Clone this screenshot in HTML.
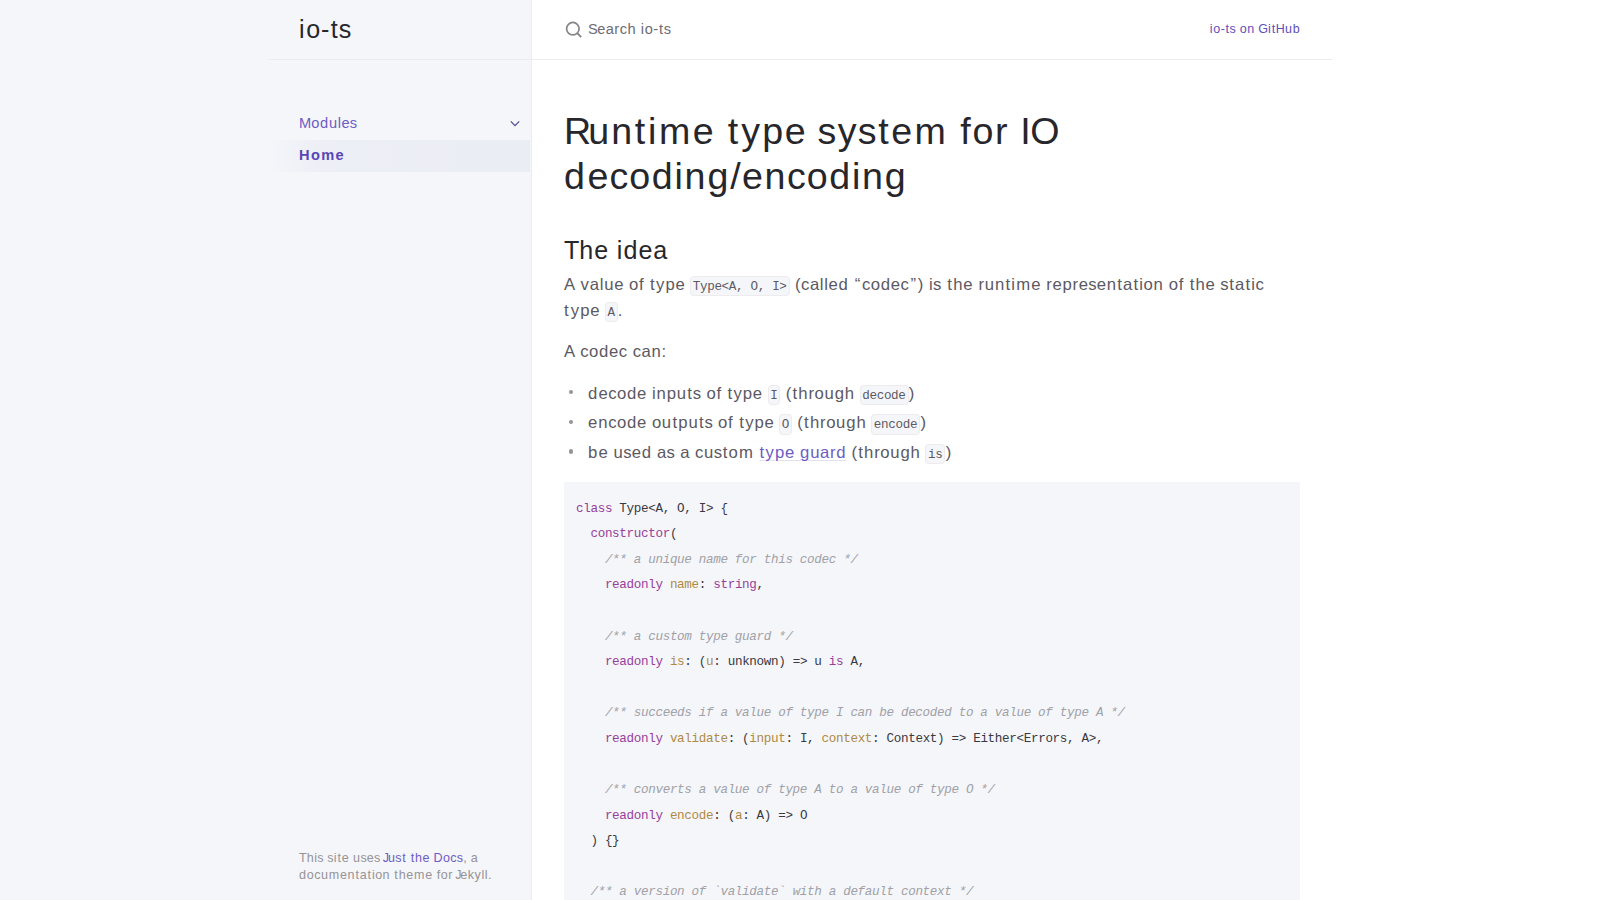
<!DOCTYPE html>
<html><head><meta charset="utf-8">
<title>io-ts</title>
<style>
* { box-sizing: border-box; margin: 0; padding: 0; }
html, body { width: 1600px; height: 900px; overflow: hidden; background: #fff; }
body { font-family: "Liberation Sans",sans-serif; font-size: 16.72px; line-height: 22.4px; color: #5c5962; position: relative; }
a { color: #6d5cc4; text-decoration: none; }
.side-bar { position: absolute; left: 0; top: 0; width: 532px; height: 900px; background: #f5f6fa; border-right: 1px solid #eeebee; }
.site-header { position: absolute; left: 268px; top: 0; width: 263px; height: 60px; border-bottom: 1px solid #eeebee; }
.site-title { position: absolute; left: 31px; top: 14px; font-size: 25.08px; line-height: 30px; color: #27262b; white-space: nowrap; }
.nav-modules { position: absolute; left: 299px; top: 111px; font-size: 14.63px; line-height: 24px; color: #6d5cc4; white-space: nowrap; }
.chev { position: absolute; left: 507px; top: 115px; }
.nav-home { position: absolute; left: 268px; top: 140px; width: 262px; height: 32px; padding: 3px 0 0 31px; font-size: 14.63px; line-height: 24px; font-weight: 700; color: #5845b5; white-space: nowrap;
  background-image: linear-gradient(-90deg, rgba(235,237,245,1) 0%, rgba(235,237,245,0.8) 80%, rgba(235,237,245,0) 100%); }
.site-footer { position: absolute; left: 299px; top: 850px; font-size: 12.54px; line-height: 16.8px; color: #959396; white-space: nowrap; }
.main-header { position: absolute; left: 532px; top: 0; width: 800px; height: 60px; border-bottom: 1px solid #eeebee; }
.search-icon { position: absolute; left: 564px; top: 20px; }
.search-text { position: absolute; left: 588px; top: 19px; font-size: 14.63px; line-height: 20px; color: #6e6c74; white-space: nowrap; }
.gh { position: absolute; right: 300px; top: 19px; font-size: 12.54px; line-height: 20px; color: #6050b8; white-space: nowrap; }
.content { position: absolute; left: 564px; top: 109px; width: 736px; }
h1 { font-size: 37.62px; line-height: 45px; font-weight: 400; color: #27262b; margin: 0 0 9px 0; white-space: nowrap; }
h2 { font-size: 25.08px; line-height: 30px; font-weight: 400; color: #27262b; margin: 37px 0 6px 0; white-space: nowrap; position: relative; top: -1px; }
p { line-height: 25.6px; margin: 0 0 16px 0; white-space: nowrap; }
ul { list-style: none; margin: 16px 0 16px 0; padding-left: 24px; }
li { line-height: 25.6px; position: relative; white-space: nowrap; }
li + li { margin-top: 4px; }
li i.b { position: absolute; left: -19.4px; top: 9.4px; width: 4.2px; height: 4.2px; border-radius: 50%; background: #959396; }
code { font-family: "Liberation Mono",monospace; font-size: 12.6px; line-height: 16.8px; padding: 3.05px 1.8px 1.45px 1.8px; background: #f5f6fa; border: 1px solid #eeebee; border-radius: 4px; color: #5c5962; }
a.ul { text-decoration: underline; text-decoration-color: #e4e0ec; text-underline-offset: 2px; text-decoration-thickness: 1px; }
pre { position: relative; margin-top: 16px; padding: 12px; background: #f5f6fa; font-family: "Liberation Sans",sans-serif; font-size: 16px; line-height: 25.6px; height: 500px; white-space: pre; }
pre span.l { font-family: "Liberation Mono",monospace; font-size: 12.6px; letter-spacing: -0.337px; line-height: 16.8px; color: #383942; }
.k { color: #96409a; }
.a { color: #ad8a45; }
.c { color: #a0a1a7; font-style: italic; }
</style></head>
<body>
<div class="side-bar"></div>
<div class="site-header"><span class="site-title"><span style="letter-spacing:1.672px">i</span><span style="letter-spacing:0.750px">o</span><span style="letter-spacing:1.359px">-</span><span style="letter-spacing:1.188px">t</span><span style="letter-spacing:0.000px">s</span></span></div>
<div class="nav-modules"><span style="letter-spacing:0.094px">M</span><span style="letter-spacing:0.594px">o</span><span style="letter-spacing:0.719px">d</span><span style="letter-spacing:0.672px">u</span><span style="letter-spacing:0.562px">l</span><span style="letter-spacing:0.219px">e</span><span style="letter-spacing:0.000px">s</span></div>
<svg class="chev" width="16" height="16" viewBox="0 0 16 16"><path d="M3.8 6.4 L8 10.6 L12.2 6.4" fill="none" stroke="#4d4390" stroke-width="1.15"/></svg>
<div class="nav-home"><span style="letter-spacing:1.484px">H</span><span style="letter-spacing:1.141px">o</span><span style="letter-spacing:1.453px">m</span><span style="letter-spacing:0.688px">e</span></div>
<div class="site-footer"><span style="letter-spacing:-0.016px">T</span><span style="letter-spacing:0.578px">h</span><span style="letter-spacing:0.266px">i</span><span style="letter-spacing:0.156px">s</span><span style="letter-spacing:0.141px"> </span><span style="letter-spacing:0.250px">s</span><span style="letter-spacing:0.891px">i</span><span style="letter-spacing:0.797px">t</span><span style="letter-spacing:0.359px">e</span><span style="letter-spacing:0.484px"> </span><span style="letter-spacing:0.297px">u</span><span style="letter-spacing:0.203px">s</span><span style="letter-spacing:0.188px">e</span><span style="letter-spacing:0.156px">s</span><span style="letter-spacing:0.172px"> </span><a><span style="letter-spacing:-1.047px;margin-left:-1.367px">J</span><span style="letter-spacing:0.297px">u</span><span style="letter-spacing:0.609px">s</span><span style="letter-spacing:0.766px">t</span><span style="letter-spacing:0.766px"> </span><span style="letter-spacing:0.922px">t</span><span style="letter-spacing:0.516px">h</span><span style="letter-spacing:0.359px">e</span><span style="letter-spacing:0.250px"> </span><span style="letter-spacing:0.266px">D</span><span style="letter-spacing:0.344px">o</span><span style="letter-spacing:0.156px">c</span><span style="letter-spacing:0.000px">s</span></a><span style="letter-spacing:0.312px;margin-left:0.172px">,</span><span style="letter-spacing:0.344px"> </span><span style="letter-spacing:0.188px">a</span><br><span style="letter-spacing:0.812px">d</span><span style="letter-spacing:0.344px">o</span><span style="letter-spacing:0.484px">c</span><span style="letter-spacing:0.938px">u</span><span style="letter-spacing:0.828px">m</span><span style="letter-spacing:0.516px">e</span><span style="letter-spacing:0.906px">n</span><span style="letter-spacing:0.797px">t</span><span style="letter-spacing:0.797px">a</span><span style="letter-spacing:0.875px">t</span><span style="letter-spacing:0.453px">i</span><span style="letter-spacing:0.484px">o</span><span style="letter-spacing:0.484px">n</span><span style="letter-spacing:0.766px"> </span><span style="letter-spacing:0.922px">t</span><span style="letter-spacing:0.516px">h</span><span style="letter-spacing:0.828px">e</span><span style="letter-spacing:0.812px">m</span><span style="letter-spacing:0.359px">e</span><span style="letter-spacing:0.531px"> </span><span style="letter-spacing:0.562px">f</span><span style="letter-spacing:0.547px">o</span><span style="letter-spacing:0.531px">r</span><span style="letter-spacing:-1.203px"> </span><span style="letter-spacing:-1.172px">J</span><span style="letter-spacing:0.328px">e</span><span style="letter-spacing:0.531px">k</span><span style="letter-spacing:0.688px">y</span><span style="letter-spacing:0.547px">l</span><span style="letter-spacing:0.422px">l</span><span style="letter-spacing:0.172px">.</span></div>
<div class="main-header"></div>
<svg class="search-icon" width="18" height="18" viewBox="0 0 18 18"><circle cx="8.85" cy="8.7" r="6.25" fill="none" stroke="#86848a" stroke-width="1.7"/><path d="M13.3 13.2 L17.2 17.1" stroke="#86848a" stroke-width="1.9"/></svg>
<div class="search-text"><span style="letter-spacing:-0.641px">S</span><span style="letter-spacing:0.453px">e</span><span style="letter-spacing:0.500px">a</span><span style="letter-spacing:0.469px">r</span><span style="letter-spacing:0.562px">c</span><span style="letter-spacing:0.547px">h</span><span style="letter-spacing:0.500px"> </span><span style="letter-spacing:0.656px">i</span><span style="letter-spacing:0.438px">o</span><span style="letter-spacing:0.797px">-</span><span style="letter-spacing:0.688px">t</span><span style="letter-spacing:0.000px">s</span></div>
<div class="gh"><span style="letter-spacing:0.828px">i</span><span style="letter-spacing:0.359px">o</span><span style="letter-spacing:0.672px">-</span><span style="letter-spacing:0.594px">t</span><span style="letter-spacing:0.156px">s</span><span style="letter-spacing:0.344px"> </span><span style="letter-spacing:0.484px">o</span><span style="letter-spacing:0.469px">n</span><span style="letter-spacing:-0.062px"> </span><span style="letter-spacing:0.047px">G</span><span style="letter-spacing:0.875px">i</span><span style="letter-spacing:0.594px">t</span><span style="letter-spacing:0.297px">H</span><span style="letter-spacing:0.641px">u</span><span style="letter-spacing:0.328px">b</span></div>
<div class="content">
<h1><span style="letter-spacing:-2.828px">R</span><span style="letter-spacing:1.875px">u</span><span style="letter-spacing:2.781px">n</span><span style="letter-spacing:2.656px">t</span><span style="letter-spacing:2.688px">i</span><span style="letter-spacing:2.484px">m</span><span style="letter-spacing:1.094px">e</span><span style="letter-spacing:2.328px"> </span><span style="letter-spacing:3.078px">t</span><span style="letter-spacing:2.203px">y</span><span style="letter-spacing:1.578px">p</span><span style="letter-spacing:1.109px">e</span><span style="letter-spacing:0.453px"> </span><span style="letter-spacing:1.219px">s</span><span style="letter-spacing:1.203px">y</span><span style="letter-spacing:1.797px">s</span><span style="letter-spacing:2.453px">t</span><span style="letter-spacing:2.469px">e</span><span style="letter-spacing:2.344px">m</span><span style="letter-spacing:1.594px"> </span><span style="letter-spacing:1.672px">f</span><span style="letter-spacing:1.672px">o</span><span style="letter-spacing:1.625px">r</span><span style="letter-spacing:0.578px"> </span><span style="letter-spacing:-0.391px">I</span><span style="letter-spacing:-0.438px">O</span><br><span style="letter-spacing:2.531px">d</span><span style="letter-spacing:1.109px">e</span><span style="letter-spacing:1.031px">c</span><span style="letter-spacing:1.516px">o</span><span style="letter-spacing:1.797px">d</span><span style="letter-spacing:1.766px">i</span><span style="letter-spacing:1.906px">n</span><span style="letter-spacing:1.812px">g</span><span style="letter-spacing:1.438px">/</span><span style="letter-spacing:1.547px">e</span><span style="letter-spacing:1.438px">n</span><span style="letter-spacing:1.047px">c</span><span style="letter-spacing:1.516px">o</span><span style="letter-spacing:1.781px">d</span><span style="letter-spacing:1.766px">i</span><span style="letter-spacing:1.906px">n</span><span style="letter-spacing:0.969px">g</span></h1>
<h2><span style="letter-spacing:-0.047px">T</span><span style="letter-spacing:1.031px">h</span><span style="letter-spacing:0.734px">e</span><span style="letter-spacing:0.875px"> </span><span style="letter-spacing:1.188px">i</span><span style="letter-spacing:1.031px">d</span><span style="letter-spacing:0.781px">e</span><span style="letter-spacing:0.391px">a</span></h2>
<p><span style="letter-spacing:0.016px">A</span><span style="letter-spacing:0.781px"> </span><span style="letter-spacing:0.797px">v</span><span style="letter-spacing:0.625px">a</span><span style="letter-spacing:0.781px">l</span><span style="letter-spacing:0.703px">u</span><span style="letter-spacing:0.484px">e</span><span style="letter-spacing:0.453px"> </span><span style="letter-spacing:0.734px">o</span><span style="letter-spacing:0.703px">f</span><span style="letter-spacing:1.031px"> </span><span style="letter-spacing:1.359px">t</span><span style="letter-spacing:0.969px">y</span><span style="letter-spacing:0.703px">p</span><span style="letter-spacing:0.484px">e</span><span style="letter-spacing:0.219px"> </span><code><span style="letter-spacing:-0.359px;margin-left:-0.164px">T</span><span style="letter-spacing:-0.344px">y</span><span style="letter-spacing:-0.328px">p</span><span style="letter-spacing:-0.359px">e</span><span style="letter-spacing:-0.344px">&lt;</span><span style="letter-spacing:-0.328px">A</span><span style="letter-spacing:-0.344px">,</span><span style="letter-spacing:-0.344px"> </span><span style="letter-spacing:-0.344px">O</span><span style="letter-spacing:-0.344px">,</span><span style="letter-spacing:-0.344px"> </span><span style="letter-spacing:-0.344px">I</span><span style="letter-spacing:-0.172px">&gt;</span></code><span style="letter-spacing:0.562px;margin-left:0.219px"> </span><span style="letter-spacing:0.547px">(</span><span style="letter-spacing:0.469px">c</span><span style="letter-spacing:0.625px">a</span><span style="letter-spacing:0.719px">l</span><span style="letter-spacing:0.641px">l</span><span style="letter-spacing:0.688px">e</span><span style="letter-spacing:0.656px">d</span><span style="letter-spacing:1.578px"> </span><span style="letter-spacing:1.578px">“</span><span style="letter-spacing:0.453px">c</span><span style="letter-spacing:0.688px">o</span><span style="letter-spacing:0.688px">d</span><span style="letter-spacing:0.500px">e</span><span style="letter-spacing:1.578px">c</span><span style="letter-spacing:1.703px">”</span><span style="letter-spacing:0.562px">)</span><span style="letter-spacing:0.578px"> </span><span style="letter-spacing:0.359px">i</span><span style="letter-spacing:0.203px">s</span><span style="letter-spacing:1.031px"> </span><span style="letter-spacing:1.234px">t</span><span style="letter-spacing:0.703px">h</span><span style="letter-spacing:0.484px">e</span><span style="letter-spacing:0.734px"> </span><span style="letter-spacing:0.922px">r</span><span style="letter-spacing:0.844px">u</span><span style="letter-spacing:1.219px">n</span><span style="letter-spacing:1.172px">t</span><span style="letter-spacing:1.203px">i</span><span style="letter-spacing:1.094px">m</span><span style="letter-spacing:0.500px">e</span><span style="letter-spacing:0.547px"> </span><span style="letter-spacing:0.609px">r</span><span style="letter-spacing:0.688px">e</span><span style="letter-spacing:0.766px">p</span><span style="letter-spacing:0.609px">r</span><span style="letter-spacing:0.250px">e</span><span style="letter-spacing:0.266px">s</span><span style="letter-spacing:0.688px">e</span><span style="letter-spacing:1.234px">n</span><span style="letter-spacing:1.078px">t</span><span style="letter-spacing:1.062px">a</span><span style="letter-spacing:1.172px">t</span><span style="letter-spacing:0.625px">i</span><span style="letter-spacing:0.656px">o</span><span style="letter-spacing:0.641px">n</span><span style="letter-spacing:0.469px"> </span><span style="letter-spacing:0.734px">o</span><span style="letter-spacing:0.703px">f</span><span style="letter-spacing:1.031px"> </span><span style="letter-spacing:1.234px">t</span><span style="letter-spacing:0.688px">h</span><span style="letter-spacing:0.500px">e</span><span style="letter-spacing:0.203px"> </span><span style="letter-spacing:0.797px">s</span><span style="letter-spacing:1.062px">t</span><span style="letter-spacing:1.062px">a</span><span style="letter-spacing:1.172px">t</span><span style="letter-spacing:0.578px">i</span><span style="letter-spacing:0.234px">c</span><br><span style="letter-spacing:2.172px">t</span><span style="letter-spacing:0.969px">y</span><span style="letter-spacing:0.703px">p</span><span style="letter-spacing:0.484px">e</span><span style="letter-spacing:0.219px"> </span><code><span style="letter-spacing:-0.172px;margin-left:-0.164px">A</span></code><span style="letter-spacing:0.219px;margin-left:0.219px">.</span></p>
<p><span style="letter-spacing:0.016px">A</span><span style="letter-spacing:0.453px"> </span><span style="letter-spacing:0.453px">c</span><span style="letter-spacing:0.672px">o</span><span style="letter-spacing:0.688px">d</span><span style="letter-spacing:0.500px">e</span><span style="letter-spacing:0.438px">c</span><span style="letter-spacing:0.438px"> </span><span style="letter-spacing:0.469px">c</span><span style="letter-spacing:0.656px">a</span><span style="letter-spacing:0.797px">n</span><span style="letter-spacing:0.375px">:</span></p>
<ul>
<li><i class="b"></i><span style="letter-spacing:1.125px">d</span><span style="letter-spacing:0.500px">e</span><span style="letter-spacing:0.453px">c</span><span style="letter-spacing:0.672px">o</span><span style="letter-spacing:0.688px">d</span><span style="letter-spacing:0.500px">e</span><span style="letter-spacing:0.578px"> </span><span style="letter-spacing:0.781px">i</span><span style="letter-spacing:0.859px">n</span><span style="letter-spacing:0.844px">p</span><span style="letter-spacing:1.234px">u</span><span style="letter-spacing:0.812px">t</span><span style="letter-spacing:0.203px">s</span><span style="letter-spacing:0.453px"> </span><span style="letter-spacing:0.734px">o</span><span style="letter-spacing:0.703px">f</span><span style="letter-spacing:1.031px"> </span><span style="letter-spacing:1.375px">t</span><span style="letter-spacing:0.969px">y</span><span style="letter-spacing:0.703px">p</span><span style="letter-spacing:0.484px">e</span><span style="letter-spacing:0.219px"> </span><code><span style="letter-spacing:-0.172px;margin-left:-0.164px">I</span></code><span style="letter-spacing:0.562px;margin-left:0.219px"> </span><span style="letter-spacing:1.141px">(</span><span style="letter-spacing:1.234px">t</span><span style="letter-spacing:0.750px">h</span><span style="letter-spacing:0.578px">r</span><span style="letter-spacing:0.672px">o</span><span style="letter-spacing:0.844px">u</span><span style="letter-spacing:0.859px">g</span><span style="letter-spacing:0.625px">h</span><span style="letter-spacing:0.219px"> </span><code><span style="letter-spacing:-0.359px;margin-left:-0.164px">d</span><span style="letter-spacing:-0.344px">e</span><span style="letter-spacing:-0.328px">c</span><span style="letter-spacing:-0.359px">o</span><span style="letter-spacing:-0.344px">d</span><span style="letter-spacing:-0.156px">e</span></code><span style="letter-spacing:0.328px;margin-left:0.344px">)</span></li>
<li><i class="b"></i><span style="letter-spacing:0.969px">e</span><span style="letter-spacing:0.656px">n</span><span style="letter-spacing:0.453px">c</span><span style="letter-spacing:0.672px">o</span><span style="letter-spacing:0.688px">d</span><span style="letter-spacing:0.500px">e</span><span style="letter-spacing:0.469px"> </span><span style="letter-spacing:0.656px">o</span><span style="letter-spacing:1.234px">u</span><span style="letter-spacing:1.250px">t</span><span style="letter-spacing:0.844px">p</span><span style="letter-spacing:1.234px">u</span><span style="letter-spacing:0.812px">t</span><span style="letter-spacing:0.203px">s</span><span style="letter-spacing:0.453px"> </span><span style="letter-spacing:0.734px">o</span><span style="letter-spacing:0.703px">f</span><span style="letter-spacing:1.031px"> </span><span style="letter-spacing:1.359px">t</span><span style="letter-spacing:0.969px">y</span><span style="letter-spacing:0.703px">p</span><span style="letter-spacing:0.484px">e</span><span style="letter-spacing:0.219px"> </span><code><span style="letter-spacing:-0.172px;margin-left:-0.164px">O</span></code><span style="letter-spacing:0.562px;margin-left:0.219px"> </span><span style="letter-spacing:1.141px">(</span><span style="letter-spacing:1.234px">t</span><span style="letter-spacing:0.750px">h</span><span style="letter-spacing:0.578px">r</span><span style="letter-spacing:0.672px">o</span><span style="letter-spacing:0.844px">u</span><span style="letter-spacing:0.859px">g</span><span style="letter-spacing:0.625px">h</span><span style="letter-spacing:0.219px"> </span><code><span style="letter-spacing:-0.359px;margin-left:-0.164px">e</span><span style="letter-spacing:-0.344px">n</span><span style="letter-spacing:-0.328px">c</span><span style="letter-spacing:-0.359px">o</span><span style="letter-spacing:-0.344px">d</span><span style="letter-spacing:-0.156px">e</span></code><span style="letter-spacing:0.328px;margin-left:0.344px">)</span></li>
<li><i class="b"></i><span style="letter-spacing:1.125px">b</span><span style="letter-spacing:0.484px">e</span><span style="letter-spacing:0.641px"> </span><span style="letter-spacing:0.406px">u</span><span style="letter-spacing:0.281px">s</span><span style="letter-spacing:0.688px">e</span><span style="letter-spacing:0.656px">d</span><span style="letter-spacing:0.484px"> </span><span style="letter-spacing:0.234px">a</span><span style="letter-spacing:0.203px">s</span><span style="letter-spacing:0.484px"> </span><span style="letter-spacing:0.469px">a</span><span style="letter-spacing:0.438px"> </span><span style="letter-spacing:0.656px">c</span><span style="letter-spacing:0.406px">u</span><span style="letter-spacing:0.797px">s</span><span style="letter-spacing:1.062px">t</span><span style="letter-spacing:1.062px">o</span><span style="letter-spacing:1.047px">m</span><span style="letter-spacing:0.219px"> </span><a class="ul"><span style="letter-spacing:1.359px;margin-left:0.812px">t</span><span style="letter-spacing:0.969px">y</span><span style="letter-spacing:0.703px">p</span><span style="letter-spacing:0.484px">e</span><span style="letter-spacing:0.656px"> </span><span style="letter-spacing:0.859px">g</span><span style="letter-spacing:0.656px">u</span><span style="letter-spacing:0.609px">a</span><span style="letter-spacing:0.797px">r</span><span style="letter-spacing:0.438px">d</span></a><span style="letter-spacing:0.562px;margin-left:0.219px"> </span><span style="letter-spacing:1.141px">(</span><span style="letter-spacing:1.234px">t</span><span style="letter-spacing:0.750px">h</span><span style="letter-spacing:0.578px">r</span><span style="letter-spacing:0.672px">o</span><span style="letter-spacing:0.844px">u</span><span style="letter-spacing:0.859px">g</span><span style="letter-spacing:0.625px">h</span><span style="letter-spacing:0.219px"> </span><code><span style="letter-spacing:-0.359px;margin-left:-0.164px">i</span><span style="letter-spacing:-0.156px">s</span></code><span style="letter-spacing:0.328px;margin-left:0.344px">)</span></li>
</ul>
<pre><span class="l"><span class="k">class</span> Type&lt;A, O, I&gt; {
  <span class="k">constructor</span>(
    <span class="c">/** a unique name for this codec */</span>
    <span class="k">readonly</span> <span class="a">name</span>: <span class="k">string</span>,

    <span class="c">/** a custom type guard */</span>
    <span class="k">readonly</span> <span class="a">is</span>: (<span class="a">u</span>: unknown) =&gt; u <span class="k">is</span> A,

    <span class="c">/** succeeds if a value of type I can be decoded to a value of type A */</span>
    <span class="k">readonly</span> <span class="a">validate</span>: (<span class="a">input</span>: I, <span class="a">context</span>: Context) =&gt; Either&lt;Errors, A&gt;,

    <span class="c">/** converts a value of type A to a value of type O */</span>
    <span class="k">readonly</span> <span class="a">encode</span>: (<span class="a">a</span>: A) =&gt; O
  ) {}

  <span class="c">/** a version of `validate` with a default context */</span>
</span></pre>
</div>
</body></html>
